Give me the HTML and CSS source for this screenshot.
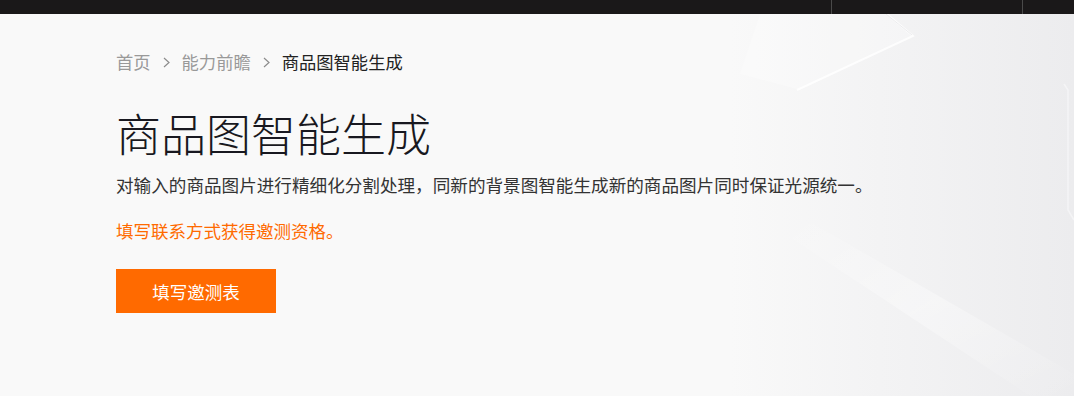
FILE: index.html
```html
<!DOCTYPE html>
<html lang="zh-CN">
<head>
<meta charset="utf-8">
<title>商品图智能生成</title>
<link rel="stylesheet" href="styles.css">
</head>
<body>
<header class="topbar">
  <div class="topbar-seg topbar-seg--a"></div>
  <div class="topbar-seg topbar-seg--b"></div>
</header>
<main class="hero">
  <svg class="hero-deco" width="1074" height="382" viewBox="0 0 1074 382" aria-hidden="true">
    <defs>
      <linearGradient id="band" x1="0" y1="0" x2="1" y2="1">
        <stop offset="0" stop-color="#ffffff" stop-opacity="0.0"/>
        <stop offset="0.5" stop-color="#ffffff" stop-opacity="0.35"/>
        <stop offset="1" stop-color="#ffffff" stop-opacity="0.0"/>
      </linearGradient>
    </defs>
    <polygon points="770,210 805,205 1074,360 1074,382 1030,382" fill="url(#band)"/>
    <polygon points="760,0 887,0 913,22 800,76 740,60" fill="#ffffff" opacity="0.25"/>
    <polyline points="887,0 913,22 797,76" fill="none" stroke="#ffffff" stroke-width="2" opacity="0.8"/>
    <polyline points="886,0 912,21" fill="none" stroke="#e0e0e2" stroke-width="1" opacity="0.6"/>
    <polyline points="1064,70 1068,76 1068,196 1074,206" fill="none" stroke="#f6f6f7" stroke-width="1.5" opacity="0.8"/>
  </svg>
  <div class="hero-inner">
    <nav class="crumbs">
      <span class="crumb crumb--link">首页</span>
      <svg class="crumb-sep" width="7" height="11" viewBox="0 0 7 11"><polyline points="1,1 6,5.5 1,10" fill="none" stroke="#8c8c8c" stroke-width="1.2"/></svg>
      <span class="crumb crumb--link">能力前瞻</span>
      <svg class="crumb-sep" width="7" height="11" viewBox="0 0 7 11"><polyline points="1,1 6,5.5 1,10" fill="none" stroke="#8c8c8c" stroke-width="1.2"/></svg>
      <span class="crumb crumb--current">商品图智能生成</span>
    </nav>
    <h1 class="hero-title">商品图智能生成</h1>
    <p class="hero-desc">对输入的商品图片进行精细化分割处理，同新的背景图智能生成新的商品图片同时保证光源统一。</p>
    <p class="hero-note">填写联系方式获得邀测资格。</p>
    <button class="hero-btn" type="button">填写邀测表</button>
  </div>
</main>
</body>
</html>
```

FILE: styles.css
```css
* { box-sizing: border-box; }
html, body { margin: 0; padding: 0; }
body {
  width: 1074px;
  height: 396px;
  overflow: hidden;
  font-family: "Noto Sans CJK SC", "Noto Sans", sans-serif;
  background: #f9f9f9;
}
.topbar {
  height: 14px;
  background: #1a1819;
  display: flex;
  justify-content: flex-end;
}
.topbar-seg {
  height: 14px;
  border-left: 1px solid #4a4a4a;
}
.topbar-seg--a { width: 191px; }
.topbar-seg--b { width: 52px; }
.hero {
  position: relative;
  height: 382px;
  background: linear-gradient(90deg, #f9f9f9 0%, #f9f9f9 68%, #f3f3f4 82%, #ececee 100%);
  overflow: hidden;
}
.hero-deco {
  position: absolute;
  left: 0;
  top: 0;
}
.hero-inner {
  position: relative;
  padding: 36px 0 0 116px;
  display: flex;
  flex-direction: column;
  align-items: flex-start;
}
.crumbs {
  display: flex;
  align-items: center;
  gap: 12px;
  height: 24px;
  font-size: 17.3px;
  line-height: 24px;
}
.crumb--link { color: #999999; }
.crumb--current { color: #222222; }
.crumb-sep { display: block; }
.hero-title {
  margin: 32px 0 0;
  font-size: 45px;
  line-height: 54px;
  font-weight: 300;
  color: #181820;
}
.hero-desc {
  margin: 13px 0 0;
  font-size: 17.6px;
  line-height: 24px;
  color: #333333;
}
.hero-note {
  margin: 22px 0 0;
  font-size: 17.5px;
  line-height: 24px;
  color: #ff6a00;
}
.hero-btn {
  margin-top: 26px;
  width: 160px;
  height: 44px;
  border: none;
  background: #ff6a00;
  color: #ffffff;
  font-family: inherit;
  font-size: 17.5px;
  padding: 0;
  cursor: pointer;
}
```
